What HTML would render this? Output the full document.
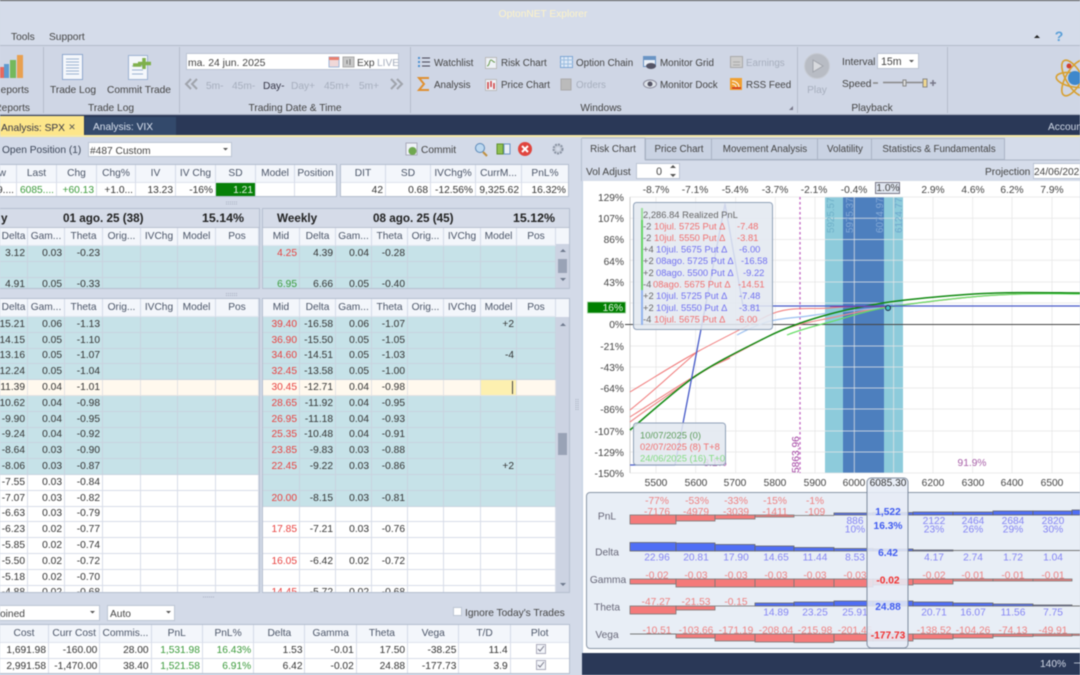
<!DOCTYPE html>
<html><head><meta charset="utf-8"><title>OptionNET Explorer</title>
<style>
html,body{margin:0;padding:0;width:1080px;height:675px;overflow:hidden;background:#d3dae8}
*{box-sizing:border-box}
body{font:10.2px "Liberation Sans",sans-serif;color:#333;position:relative}
#root{position:absolute;left:0;top:0;width:1080px;height:675px;overflow:hidden;filter:blur(.4px)}
.p{position:absolute}
.r{display:flex;height:15.8px;background:#fff}
.r>i{font-style:normal;display:flex;justify-content:flex-end;align-items:center;padding-right:2px;border-right:1px solid #d8dde8;border-bottom:1px solid #d8dde8;white-space:nowrap;flex:none;height:100%;color:#333;position:relative}
.r.a{background:#c6e2e8}.r.c{background:#fff9ee}
.r.a>i{border-color:#c8d3df}.r.c>i{border-color:#e3e3e3}
.h{height:18px;background:#f3f6fb}
.h>i{justify-content:center;padding:0;color:#4b5568;border-color:#d5dbe8;border-bottom:1px solid #dfe4ee}
.L .r>i:nth-child(1){width:28px}.L .r>i:nth-child(2){width:37px}.L .r>i:nth-child(3){width:38px}.L .r>i:nth-child(4){width:38px}.L .r>i:nth-child(5){width:37px}.L .r>i:nth-child(6){width:38px}.L .r>i:nth-child(7){width:43px}
.R .r>i:nth-child(1){width:37px}.R .r>i:nth-child(2){width:36px}.R .r>i:nth-child(3){width:36px}.R .r>i:nth-child(4){width:36px}.R .r>i:nth-child(5){width:36px}.R .r>i:nth-child(6){width:37px}.R .r>i:nth-child(7){width:36px}.R .r>i:nth-child(8){width:39px}
.R .r>i:nth-child(1){color:#e8403f}
.R .r.h>i:nth-child(1){color:#4b5568}
.R .r>i.g{color:#3a9a3a}
.sb{position:absolute;background:#ccd3e2}
.th{background:#d5dbe8;height:19px;border-bottom:1px solid #b9c1d0;font-weight:bold;font-size:11.7px;color:#222;position:relative}
.th span{position:absolute;top:3px;white-space:nowrap}
.th span.pc{font-size:12.4px;top:2px}
.box{border:1px solid #b5bfd0;overflow:hidden}
.T1 .r>i:nth-child(1){width:17px}.T1 .r>i:nth-child(2){width:40px}.T1 .r>i:nth-child(3){width:40px}.T1 .r>i:nth-child(4){width:39px}.T1 .r>i:nth-child(5){width:40px}.T1 .r>i:nth-child(6){width:40px}.T1 .r>i:nth-child(7){width:40px}.T1 .r>i:nth-child(8){width:39px}.T1 .r>i:nth-child(9){width:42px}
.T1 .r.h>i:nth-child(1){justify-content:flex-end;padding-right:10px}
.T2 .r>i:nth-child(1){width:45px}.T2 .r>i:nth-child(2){width:45px}.T2 .r>i:nth-child(3){width:45px}.T2 .r>i:nth-child(4){width:46px}.T2 .r>i:nth-child(5){width:47px}
.T3 .r>i{width:51.3px}.T3 .r>i:nth-child(1){width:49px}.T3 .r>i:nth-child(11){width:59px}
.gr{color:#3a9a3a!important}
.d{height:15px}
.inp{position:absolute;background:#fff;border:1px solid #bcc5d4}
svg text{font-family:"Liberation Sans",sans-serif;font-size:10.2px;fill:#444}
svg text.w{font-size:9.8px}
.m{text-anchor:middle}.e{text-anchor:end}
.dis{fill:#a6aebd}
.rb{fill:#f47a7a;stroke:#777;stroke-width:.8}
.bb{fill:#4f6ef5;stroke:#666;stroke-width:.8}
.lr{fill:#ee8080}.lb{fill:#8484f4}
.tr text{font-size:9.4px}
.rd{fill:#f07070}.bl{fill:#7070f0}.gy{fill:#666}
</style></head>
<body><div id="root">

<!-- title / ribbon backgrounds -->
<div class="p" style="left:0;top:0;width:1080px;height:1px;background:#555"></div>
<div class="p" style="left:0;top:1px;width:1080px;height:45px;background:#d5dcea;border-bottom:1px solid #b4bccb"></div>
<div class="p" style="left:0;top:46px;width:1080px;height:69px;background:#cfd6e5;border-bottom:1px solid #aeb6c6"></div>
<div class="p" style="left:0;top:115px;width:1080px;height:20px;background:#2a3857"></div>
<div class="p" style="left:0;top:116px;width:84px;height:20px;background:#fde68a"></div>
<div class="p" style="left:85px;top:117px;width:91px;height:18px;background:#33496b"></div>
<div class="p" style="left:0;top:135px;width:1080px;height:2px;background:#f6e8a6"></div>

<!-- inputs in ribbon -->
<div class="inp" style="left:186px;top:53px;width:213px;height:17px"></div>
<div class="inp" style="left:877px;top:53px;width:42px;height:16px"></div>

<!-- left panel top -->
<div class="inp" style="left:88px;top:142px;width:144px;height:15px"></div>

<div class="p box T1" style="left:0;top:164px;width:337px;height:33px;border-left:0">
<div class="r h"><i>w</i><i>Last</i><i>Chg</i><i>Chg%</i><i>IV</i><i>IV Chg</i><i>SD</i><i>Model</i><i>Position</i></div>
<div class="r d"><i>9....</i><i class="gr">6085....</i><i class="gr">+60.13</i><i>+1.0...</i><i>13.23</i><i>-16%</i><i style="background:#078007;color:#e8f4e8">1.21</i><i></i><i></i></div>
</div>
<div class="p box T2" style="left:340px;top:164px;width:229px;height:33px">
<div class="r h"><i>DIT</i><i>SD</i><i>IVChg%</i><i>CurrM...</i><i>PnL%</i></div>
<div class="r d"><i>42</i><i>0.68</i><i>-12.56%</i><i>9,325.62</i><i>16.32%</i></div>
</div>

<!-- grid 1 left -->
<div class="p box L" style="left:-1px;top:208px;width:261px;height:81px">
<div class="th"><span style="left:1px">y</span><span style="left:63px">01 ago. 25 (38)</span><span class="pc" style="left:202px">15.14%</span></div>
<div class="r h"><i>Delta</i><i>Gam...</i><i>Theta</i><i>Orig...</i><i>IVChg</i><i>Model</i><i>Pos</i></div>
<div class="r a"><i>3.12</i><i>0.03</i><i>-0.23</i><i></i><i></i><i></i><i></i></div>
<div class="r a"><i></i><i></i><i></i><i></i><i></i><i></i><i></i></div>
<div class="r a"><i>4.91</i><i>0.05</i><i>-0.33</i><i></i><i></i><i></i><i></i></div>
</div>
<!-- grid 1 right -->
<div class="p box R" style="left:262px;top:208px;width:308px;height:81px">
<div class="th"><span style="left:14px">Weekly</span><span style="left:110px">08 ago. 25 (45)</span><span class="pc" style="left:250px">15.12%</span></div>
<div class="r h"><i>Mid</i><i>Delta</i><i>Gam...</i><i>Theta</i><i>Orig...</i><i>IVChg</i><i>Model</i><i>Pos</i></div>
<div class="r a"><i>4.25</i><i>4.39</i><i>0.04</i><i>-0.28</i><i></i><i></i><i></i><i></i></div>
<div class="r a"><i></i><i></i><i></i><i></i><i></i><i></i><i></i><i></i></div>
<div class="r a"><i class="g">6.95</i><i>6.66</i><i>0.05</i><i>-0.40</i><i></i><i></i><i></i><i></i></div>
</div>
<div class="sb" style="left:556px;top:244px;width:13px;height:44px"></div>
<div class="p" style="left:558px;top:259px;width:9px;height:14px;background:#99a3b6"></div>

<!-- grid 2 left -->
<div class="p box L" style="left:-1px;top:298px;width:261px;height:295px">
<div class="r h"><i>Delta</i><i>Gam...</i><i>Theta</i><i>Orig...</i><i>IVChg</i><i>Model</i><i>Pos</i></div>
<div class="r a"><i>-15.21</i><i>0.06</i><i>-1.13</i><i></i><i></i><i></i><i></i></div>
<div class="r a"><i>-14.15</i><i>0.05</i><i>-1.10</i><i></i><i></i><i></i><i></i></div>
<div class="r a"><i>-13.16</i><i>0.05</i><i>-1.07</i><i></i><i></i><i></i><i></i></div>
<div class="r a"><i>-12.24</i><i>0.05</i><i>-1.04</i><i></i><i></i><i></i><i></i></div>
<div class="r c"><i>-11.39</i><i>0.04</i><i>-1.01</i><i></i><i></i><i></i><i></i></div>
<div class="r a"><i>-10.62</i><i>0.04</i><i>-0.98</i><i></i><i></i><i></i><i></i></div>
<div class="r a"><i>-9.90</i><i>0.04</i><i>-0.95</i><i></i><i></i><i></i><i></i></div>
<div class="r a"><i>-9.24</i><i>0.04</i><i>-0.92</i><i></i><i></i><i></i><i></i></div>
<div class="r a"><i>-8.64</i><i>0.03</i><i>-0.90</i><i></i><i></i><i></i><i></i></div>
<div class="r a"><i>-8.06</i><i>0.03</i><i>-0.87</i><i></i><i></i><i></i><i></i></div>
<div class="r"><i>-7.55</i><i>0.03</i><i>-0.84</i><i></i><i></i><i></i><i></i></div>
<div class="r"><i>-7.07</i><i>0.03</i><i>-0.82</i><i></i><i></i><i></i><i></i></div>
<div class="r"><i>-6.63</i><i>0.03</i><i>-0.79</i><i></i><i></i><i></i><i></i></div>
<div class="r"><i>-6.23</i><i>0.02</i><i>-0.77</i><i></i><i></i><i></i><i></i></div>
<div class="r"><i>-5.85</i><i>0.02</i><i>-0.74</i><i></i><i></i><i></i><i></i></div>
<div class="r"><i>-5.50</i><i>0.02</i><i>-0.72</i><i></i><i></i><i></i><i></i></div>
<div class="r"><i>-5.18</i><i>0.02</i><i>-0.70</i><i></i><i></i><i></i><i></i></div>
<div class="r"><i>-4.88</i><i>0.02</i><i>-0.68</i><i></i><i></i><i></i><i></i></div>
</div>
<!-- grid 2 right -->
<div class="p box R" style="left:262px;top:298px;width:308px;height:295px">
<div class="r h"><i>Mid</i><i>Delta</i><i>Gam...</i><i>Theta</i><i>Orig...</i><i>IVChg</i><i>Model</i><i>Pos</i></div>
<div class="r a"><i>39.40</i><i>-16.58</i><i>0.06</i><i>-1.07</i><i></i><i></i><i>+2</i><i></i></div>
<div class="r a"><i>36.90</i><i>-15.50</i><i>0.05</i><i>-1.05</i><i></i><i></i><i></i><i></i></div>
<div class="r a"><i>34.60</i><i>-14.51</i><i>0.05</i><i>-1.03</i><i></i><i></i><i>-4</i><i></i></div>
<div class="r a"><i>32.45</i><i>-13.58</i><i>0.05</i><i>-1.00</i><i></i><i></i><i></i><i></i></div>
<div class="r c"><i>30.45</i><i>-12.71</i><i>0.04</i><i>-0.98</i><i></i><i></i><i style="background:#fdf0b0"><span style="position:absolute;right:3px;top:1px;width:1px;height:13px;background:#444"></span></i><i></i></div>
<div class="r a"><i>28.65</i><i>-11.92</i><i>0.04</i><i>-0.95</i><i></i><i></i><i></i><i></i></div>
<div class="r a"><i>26.95</i><i>-11.18</i><i>0.04</i><i>-0.93</i><i></i><i></i><i></i><i></i></div>
<div class="r a"><i>25.35</i><i>-10.48</i><i>0.04</i><i>-0.91</i><i></i><i></i><i></i><i></i></div>
<div class="r a"><i>23.85</i><i>-9.83</i><i>0.03</i><i>-0.88</i><i></i><i></i><i></i><i></i></div>
<div class="r a"><i>22.45</i><i>-9.22</i><i>0.03</i><i>-0.86</i><i></i><i></i><i>+2</i><i></i></div>
<div class="r a"><i></i><i></i><i></i><i></i><i></i><i></i><i></i><i></i></div>
<div class="r a"><i>20.00</i><i>-8.15</i><i>0.03</i><i>-0.81</i><i></i><i></i><i></i><i></i></div>
<div class="r"><i></i><i></i><i></i><i></i><i></i><i></i><i></i><i></i></div>
<div class="r"><i>17.85</i><i>-7.21</i><i>0.03</i><i>-0.76</i><i></i><i></i><i></i><i></i></div>
<div class="r"><i></i><i></i><i></i><i></i><i></i><i></i><i></i><i></i></div>
<div class="r"><i>16.05</i><i>-6.42</i><i>0.02</i><i>-0.72</i><i></i><i></i><i></i><i></i></div>
<div class="r"><i></i><i></i><i></i><i></i><i></i><i></i><i></i><i></i></div>
<div class="r"><i>14.45</i><i>-5.72</i><i>0.02</i><i>-0.68</i><i></i><i></i><i></i><i></i></div>
</div>
<div class="sb" style="left:556px;top:317px;width:13px;height:275px"></div>
<div class="p" style="left:558px;top:433px;width:9px;height:22px;background:#99a3b6"></div>

<!-- bottom controls -->
<div class="inp" style="left:-2px;top:605px;width:102px;height:16px"></div>
<div class="inp" style="left:107px;top:605px;width:68px;height:16px"></div>
<div class="inp" style="left:453px;top:607px;width:9px;height:9px"></div>
<div class="p box T3" style="left:-1px;top:624px;width:571px;height:50px">
<div class="r h"><i>Cost</i><i>Curr Cost</i><i>Commis...</i><i>PnL</i><i>PnL%</i><i>Delta</i><i>Gamma</i><i>Theta</i><i>Vega</i><i>T/D</i><i>Plot</i></div>
<div class="r"><i>1,691.98</i><i>-160.00</i><i>28.00</i><i class="gr">1,531.98</i><i class="gr">16.43%</i><i>1.53</i><i>-0.01</i><i>17.50</i><i>-38.25</i><i>11.4</i><i></i></div>
<div class="r"><i>2,991.58</i><i>-1,470.00</i><i>38.40</i><i class="gr">1,521.58</i><i class="gr">6.91%</i><i>6.42</i><i>-0.02</i><i>24.88</i><i>-177.73</i><i>3.9</i><i></i></div>
</div>

<!-- right panel backgrounds -->
<div class="p" style="left:581px;top:138px;width:499px;height:43px;background:#d5dcea;border-left:1px solid #b5bfd0"></div>
<div class="p" style="left:582px;top:181px;width:498px;height:472px;background:#fff;border-left:1px solid #c3cfe2"></div>
<div class="inp" style="left:636px;top:163px;width:44px;height:16px"></div>
<div class="inp" style="left:1033px;top:163px;width:60px;height:16px"></div>
<div class="p" style="left:582px;top:653px;width:498px;height:22px;background:#2a3857"></div>
<div class="p" style="left:586px;top:492px;width:500px;height:157px;background:#e8eef6;border:1px solid #8a97a8;border-radius:4px"></div>

<svg class="p" style="left:0;top:0" width="1080" height="675" viewBox="0 0 1080 675" xmlns="http://www.w3.org/2000/svg">
<!-- title & menu -->
<text x="543" y="17" class="m" style="fill:#fdf3c8">OptonNET Explorer</text>
<text x="11" y="40">Tools</text><text x="49" y="40">Support</text>
<path d="M1034 38l3-3 3 3z" fill="#222"/>
<text x="1059" y="41" class="m" style="fill:#5a9fd8;font-size:14px;font-weight:bold">?</text>

<!-- separators -->
<g stroke="#b6bdcc"><path d="M43.5 47v66M179.5 47v66M410.5 47v66M797.5 47v66M947.5 47v66"/></g>

<!-- reports icon -->
<rect x="-1" y="67" width="5" height="11" fill="#e66a5e"/><rect x="4" y="64" width="5" height="14" fill="#5f9bd0"/><rect x="10" y="60" width="6" height="18" fill="#74b85c"/><rect x="17" y="55" width="6" height="23" fill="#e8a050"/>
<text x="29" y="93" class="e">Reports</text>
<text x="30" y="111" class="e">Reports</text>
<!-- trade log icon -->
<rect x="62.5" y="54.5" width="20" height="25" fill="#f4f7fb" stroke="#8fa9cd"/><path d="M66 59h13M66 62h13M66 65h13M66 68h13M66 71h13M66 74h13" stroke="#9db3d2"/>
<text x="73" y="93" class="m">Trade Log</text>
<rect x="128.5" y="55.5" width="19" height="24" fill="#f4f7fb" stroke="#9db3d2"/><path d="M132 66h11M132 70h11M132 74h11" stroke="#9db3d2"/>
<path d="M133 65h8M144 58v11M138 63.5h13" stroke="#7fb04c" stroke-width="3.5" fill="none"/>
<text x="139" y="93" class="m">Commit Trade</text>
<text x="111" y="111" class="m">Trade Log</text>

<!-- date -->
<text x="188" y="66" style="font-size:10.4px">ma. 24 jun. 2025</text>
<rect x="329" y="57" width="10" height="10" fill="#f0d8d8" stroke="#a0b8d8"/><rect x="329" y="57" width="10" height="3" fill="#e88070"/>
<rect x="343" y="57" width="11" height="10" fill="#c8c8c8" stroke="#aaa"/><path d="M347 60v4M350 59v6" stroke="#777"/>
<text x="357" y="66">Exp</text><text x="377" y="66" class="dis">LIVE</text>
<path d="M191 79l-5 5 5 5M197 79l-5 5 5 5M391 79l5 5-5 5M397 79l5 5-5 5" fill="none" stroke="#a0a4ac" stroke-width="2"/>
<text x="206" y="89" class="dis">5m-</text><text x="232" y="89" class="dis">45m-</text><text x="263" y="89" style="fill:#334">Day-</text><text x="291" y="89" class="dis">Day+</text><text x="324" y="89" class="dis">45m+</text><text x="359" y="89" class="dis">5m+</text>
<text x="295" y="111" class="m">Trading Date &amp; Time</text>

<!-- windows -->
<g fill="#4a90d0"><rect x="418" y="57" width="2" height="2"/><rect x="418" y="61" width="2" height="2"/><rect x="418" y="65" width="2" height="2"/></g><path d="M422 58h8M422 62h8M422 66h8" stroke="#445"/>
<text x="434" y="66" class="w">Watchlist</text>
<path d="M429 78h-10l5 6-5 6h10" fill="none" stroke="#e09030" stroke-width="2"/>
<text x="434" y="88" class="w">Analysis</text>
<rect x="485.5" y="57.5" width="11" height="11" fill="#eef2f7" stroke="#bbb"/><path d="M487 66c3 0 2-6 4-6s2 3 4 2" fill="none" stroke="#6a9a50"/>
<text x="501" y="66" class="w">Risk Chart</text>
<rect x="485.5" y="79.5" width="11" height="11" fill="#eef2f7" stroke="#bbb"/><path d="M488 82v7M491 81v6M494 83v6" stroke="#d04040" stroke-width="1.5"/>
<text x="501" y="88" class="w">Price Chart</text>
<rect x="560.5" y="56.5" width="12" height="11" fill="#dce8f6" stroke="#7ea6d4"/><path d="M560 60h13M560 64h13M564 57v10M568 57v10" stroke="#9cbde0" />
<text x="576" y="66" class="w">Option Chain</text>
<rect x="561" y="79" width="10" height="11" fill="#bbb" stroke="#aaa"/>
<text x="576" y="88" class="w dis">Orders</text>
<rect x="643.5" y="56.5" width="12" height="10" fill="#e8eef6" stroke="#6a94c4"/><rect x="644" y="57" width="11" height="3" fill="#6a94c4"/><ellipse cx="651" cy="66" rx="5" ry="3" fill="#556"/>
<text x="660" y="66" class="w">Monitor Grid</text>
<ellipse cx="650" cy="84" rx="6.5" ry="4" fill="#dfe4ea" stroke="#889"/><circle cx="650" cy="84" r="2.5" fill="#556"/>
<text x="660" y="88" class="w">Monitor Dock</text>
<rect x="730.5" y="56.5" width="12" height="11" fill="#ccc" stroke="#aaa"/><path d="M733 62h7M733 65h7" stroke="#aaa"/>
<text x="746" y="66" class="w dis">Earnings</text>
<rect x="730" y="78" width="12" height="12" fill="#f0a030"/><path d="M732 88h9" stroke="#d03020" stroke-width="1.5"/><path d="M732 81c4 0 7 3 7 6M732 84c2 0 4 1 4 3" fill="none" stroke="#fff"/>
<text x="746" y="88" class="w">RSS Feed</text>
<text x="601" y="111" class="m">Windows</text>
<path d="M793 110v-4l-4 4z" fill="#778"/>

<!-- playback -->
<circle cx="817" cy="66" r="12.5" fill="#b8bcc4" stroke="#c8ccd4"/><path d="M813 60l10 6-10 6z" fill="#d8dade" stroke="#a0a4ac"/>
<text x="817" y="93" class="m dis">Play</text>
<text x="842" y="65">Interval</text><text x="881" y="65" style="font-size:10.6px">15m</text><path d="M909 60l2.5 2.5 2.5-2.5z" fill="#555"/>
<text x="842" y="87">Speed</text>
<path d="M873 83h5M883 82.5h42" stroke="#888" stroke-width="1.5"/><rect x="903" y="80" width="3" height="6" fill="#ddd" stroke="#888"/><rect x="923" y="79" width="4" height="8" fill="#f0d890" stroke="#888"/><path d="M930 83h6M933 80v6" stroke="#778" stroke-width="1.5"/>
<text x="872" y="111" class="m">Playback</text>
<!-- atom -->
<g fill="none" stroke="#d8a030" stroke-width="1.6"><ellipse cx="1074" cy="78" rx="20" ry="8" transform="rotate(60 1074 78)"/><ellipse cx="1074" cy="78" rx="20" ry="8" transform="rotate(-60 1074 78)"/><ellipse cx="1074" cy="80" rx="18" ry="7" transform="rotate(10 1074 80)"/></g>
<circle cx="1075" cy="78" r="7" fill="#3f88cc"/><circle cx="1069" cy="66" r="2.5" fill="#d04030"/>

<!-- tabs -->
<text x="1" y="131" style="fill:#334">Analysis: SPX</text>
<text x="72" y="130" class="m" style="fill:#555;font-size:9px">✕</text>
<text x="93" y="130" style="fill:#d8e0ee">Analysis: VIX</text>
<text x="1048" y="130" style="fill:#cfd7e5">Account</text>

<!-- open position row -->
<text x="2" y="153" style="fill:#3c4658">Open Position (1)</text>
<text x="90" y="154">#487 Custom</text><path d="M223 148l2.5 2.5 2.5-2.500z" fill="#555"/>
<rect x="406" y="143" width="11" height="12" fill="#eef2f7" stroke="#aab"/><circle cx="412.5" cy="151" r="4" fill="#70a850"/>
<text x="421" y="153">Commit</text>
<circle cx="480" cy="148" r="4.5" fill="#bcd8f0" stroke="#5a88b8"/><path d="M483 152l4 4" stroke="#c09040" stroke-width="2"/>
<rect x="497" y="144" width="6" height="10" fill="#90c050" stroke="#609030"/><rect x="504" y="144" width="6" height="10" fill="#e8eef6" stroke="#6a94c4"/>
<circle cx="525" cy="149" r="7" fill="#e0453e"/><path d="M522 146l6 6M528 146l-6 6" stroke="#fff" stroke-width="2"/>
<circle cx="558" cy="149" r="4.5" fill="#c3cad6" stroke="#8a93a3" stroke-width="2" stroke-dasharray="2 1"/><circle cx="558" cy="149" r="2" fill="#d3dae8"/>

<!-- splitter grips & scroll arrows -->
<g fill="none" stroke="#a9b1c1" stroke-dasharray="1 1"><path d="M226 202h12M226 204h12M226 293.5h12M226 295.5h12M203 597h12M576 399v12M578 399v12"/></g>
<path d="M560 252l3-3 3 3zM560 278l3 3 3-3zM560 326l3-3 3 3zM560 583l3 3 3-3z" fill="#6f7a8e"/>

<!-- bottom controls -->
<text x="0" y="617">oined</text><path d="M90 611l2.5 2.5 2.5-2.5z" fill="#555"/>
<text x="110" y="617">Auto</text><path d="M166 611l2.5 2.500 2.5-2.5z" fill="#555"/>
<text x="465" y="616">Ignore Today's Trades</text>
<rect x="536.5" y="644.5" width="9" height="9" fill="#f4f6fa" stroke="#aab"/><path d="M538 649l2 2 4-5" fill="none" stroke="#778"/>
<rect x="536.5" y="660.5" width="9" height="9" fill="#f4f6fa" stroke="#aab"/><path d="M538 665l2 2 4-5" fill="none" stroke="#778"/>

<!-- right tabs -->
<g fill="#c9d2e2" stroke="#aab4c5"><rect x="645.5" y="138.5" width="66" height="21"/><rect x="711.5" y="138.5" width="106" height="21"/><rect x="817.5" y="138.5" width="54" height="21"/><rect x="871.5" y="138.5" width="133" height="21"/></g>
<path d="M582 138h63v22" fill="none" stroke="#aab4c5"/><path d="M645 160h435" stroke="#aab4c5"/>
<text x="613" y="152" class="m w">Risk Chart</text><text x="679" y="152" class="m w">Price Chart</text><text x="765" y="152" class="m w">Movement Analysis</text><text x="845" y="152" class="m w">Volatility</text><text x="939" y="152" class="m w">Statistics &amp; Fundamentals</text>
<text x="586" y="175">Vol Adjust</text><text x="662" y="175" class="e" style="font-size:10.6px">0</text><path d="M670 168l3-3 3 3zM670 174l3 3 3-3z" fill="#555"/>
<text x="985" y="175">Projection</text><text x="1034" y="175">24/06/202</text>

<!-- chart -->
<rect x="825" y="197" width="78" height="276" fill="#8dcbdb"/>
<rect x="843" y="197" width="41" height="276" fill="#4d7fbe"/>
<g stroke="#e6e6e6" stroke-opacity=".75"><path d="M630 197h450M630 218.3h450M630 239.5h450M630 260.3h450M630 282h450M630 303h450M630 346h450M630 367h450M630 388h450M630 409h450M630 431h450M630 452h450M630 473h450"/>
<path d="M656 197v276M695.7 197v276M735.7 197v276M775.3 197v276M815 197v276M854.3 197v276M893.6 197v276M933 197v276M972.7 197v276M1012 197v276M1052 197v276"/></g>
<path d="M630 197v276" stroke="#ccc"/>
<path d="M625 324.5h455" stroke="#444"/>
<path d="M800 197v276" stroke="#c060c0" stroke-width="1.3" stroke-dasharray="2.5 2.5"/>
<text transform="translate(834 233) rotate(-90)" style="fill:#6fb0c8;font-size:9.8px">5925.57</text><text transform="translate(853 233) rotate(-90)" style="fill:#84a9d6;font-size:9.8px">5975.37</text><text transform="translate(883 233) rotate(-90)" style="fill:#84a9d6;font-size:9.8px">6074.97</text><text transform="translate(902 233) rotate(-90)" style="fill:#6fa8cc;font-size:9.8px">6124.77</text>
<text transform="translate(799 473) rotate(-90)" style="fill:#a040a0">5863.96</text>
<text x="715" y="466" class="m" style="fill:#a040a0">8.1%</text><text x="972" y="466" class="m" style="fill:#a860a8">91.9%</text>

<g fill="none" stroke-linejoin="round">
<path d="M630 392C655 377 675 364 697 352S745 327 767 316S810 310 830 308S870 306 884 306" stroke="#f07878"/>
<path d="M630 410C655 390 678 368 697 352" stroke="#f07878"/>
<path d="M630 417C652 403 672 390 693 377S720 363 730 358" stroke="#f07878"/>
<path d="M630 422C650 407 670 394 690 380S745 349 767 337S810 322 830 318S865 310 880 308S960 297 997 295S1060 293 1080 293" stroke="#f08a8a" stroke-width="1.2"/>
<path d="M737 335C748 329 758 325 767 322S790 318 800 317S820 314 830 313S865 309 880 308" stroke="#9cc0f0" stroke-width="1.2"/>
<path d="M787 335C802 329 815 326 830 322S865 311 883 308S960 297 997 295S1060 294 1080 294" stroke="#66dd66" stroke-width="1.2"/>
<path d="M630 430C650 413 670 395 690 380S745 348 767 337S815 318 830 314S865 306 883 303S960 294 997 293S1060 293 1080 293" stroke="#118a11" stroke-width="1.5"/>
<path d="M630 465H675L725 204L743 306H1080" stroke="#4458c8" stroke-width="1.3"/>
<path d="M830 306.5h55" stroke="#7a3fa0"/>
</g>
<circle cx="888" cy="308" r="2.5" fill="#40c0c0" stroke="#224"/>

<!-- Y labels -->
<text x="624" y="201" class="e">129%</text><text x="624" y="222" class="e">107%</text><text x="624" y="243" class="e">86%</text><text x="624" y="265" class="e">64%</text><text x="624" y="286" class="e">43%</text><text x="624" y="328" class="e">0%</text><text x="624" y="350" class="e">-21%</text><text x="624" y="371" class="e">-43%</text><text x="624" y="392" class="e">-64%</text><text x="624" y="413" class="e">-86%</text><text x="624" y="435" class="e">-107%</text><text x="624" y="456" class="e">-129%</text><text x="624" y="477" class="e">-150%</text>
<rect x="587.5" y="302" width="38" height="11" fill="#008000" stroke="#9ccf9c" stroke-width=".8"/>
<text x="623" y="311" class="e" style="fill:#e8f4e8">16%</text>

<!-- top labels -->
<text x="656" y="193" class="m">-8.7%</text><text x="695" y="193" class="m">-7.1%</text><text x="735" y="193" class="m">-5.4%</text><text x="775" y="193" class="m">-3.7%</text><text x="814" y="193" class="m">-2.1%</text><text x="854" y="193" class="m">-0.4%</text>
<text x="933" y="193" class="m">2.9%</text><text x="973" y="193" class="m">4.6%</text><text x="1012" y="193" class="m">6.2%</text><text x="1052" y="193" class="m">7.9%</text>
<rect x="875.5" y="182.5" width="24" height="11" fill="#e0e6f0" stroke="#778"/><text x="888" y="191" class="m">1.0%</text>

<!-- x labels -->
<text x="656" y="486" class="m">5500</text><text x="696" y="486" class="m">5600</text><text x="735" y="486" class="m">5700</text><text x="775" y="486" class="m">5800</text><text x="815" y="486" class="m">5900</text><text x="854" y="486" class="m">6000</text><text x="933" y="486" class="m">6200</text><text x="973" y="486" class="m">6300</text><text x="1012" y="486" class="m">6400</text><text x="1052" y="486" class="m">6500</text>

<!-- tooltip -->
<rect x="633.5" y="202.5" width="139" height="127" rx="3" fill="#e2e8f0" fill-opacity=".87" stroke="#8fa0b8"/>
<g stroke-width="2"><path d="M642 208v12" stroke="#9ce09c"/><path d="M642 220v70" stroke="#66d466"/><path d="M642 290v35" stroke="#94b4ee"/></g>
<g class="tr">
<text x="643" y="218" class="gy">2,286.84 Realized PnL</text>
<text x="643" y="229.5" class="gy">-2</text><text x="654" y="229.5" class="rd">10jul. 5725 Put Δ</text><text x="737" y="229.5" class="rd">-7.48</text>
<text x="643" y="241" class="gy">-2</text><text x="654" y="241" class="rd">10jul. 5550 Put Δ</text><text x="737" y="241" class="rd">-3.81</text>
<text x="643" y="252.5" class="gy">+4</text><text x="656" y="252.5" class="bl">10jul. 5675 Put Δ</text><text x="739" y="252.5" class="bl">-6.00</text>
<text x="643" y="264" class="gy">+2</text><text x="656" y="264" class="bl">08ago. 5725 Put Δ</text><text x="741" y="264" class="bl">-16.58</text>
<text x="643" y="276" class="gy">+2</text><text x="656" y="276" class="bl">08ago. 5500 Put Δ</text><text x="743" y="276" class="bl">-9.22</text>
<text x="643" y="287.5" class="gy">-4</text><text x="653" y="287.5" class="rd">08ago. 5675 Put Δ</text><text x="738" y="287.5" class="rd">-14.51</text>
<text x="643" y="299" class="gy">+2</text><text x="656" y="299" class="bl">10jul. 5725 Put Δ</text><text x="739" y="299" class="bl">-7.48</text>
<text x="643" y="311" class="gy">+2</text><text x="656" y="311" class="bl">10jul. 5550 Put Δ</text><text x="739" y="311" class="bl">-3.81</text>
<text x="643" y="322.5" class="gy">-4</text><text x="654" y="322.5" class="rd">10jul. 5675 Put Δ</text><text x="736" y="322.5" class="rd">-6.00</text>
</g>
<!-- legend -->
<rect x="633.5" y="423" width="92" height="42" rx="3" fill="#e2e8f0" fill-opacity=".87" stroke="#8fa0b8"/>
<g class="tr"><text x="640" y="438.5" style="fill:#5c9c5c">10/07/2025 (0)</text><text x="640" y="450" class="rd">02/07/2025 (8) T+8</text><text x="640" y="461.5" style="fill:#84dc84">24/06/2025 (16) T+0</text></g>

<!-- lower panel labels -->
<text x="607" y="519.5" class="m" style="fill:#667">PnL</text><text x="607" y="555.5" class="m" style="fill:#667">Delta</text><text x="608" y="583" class="m" style="fill:#667">Gamma</text><text x="607" y="610.5" class="m" style="fill:#667">Theta</text><text x="607" y="638" class="m" style="fill:#667">Vega</text>

<!-- PnL bars -->
<rect class="rb" x="630" y="515" width="46" height="9"/><rect class="rb" x="676" y="515" width="39" height="6"/><rect class="rb" x="715" y="515" width="40" height="4"/><rect class="rb" x="755" y="515" width="39" height="2"/><path d="M794 515.5h40" stroke="#888"/>
<rect class="bb" x="834" y="513" width="39" height="2"/><rect class="bb" x="873" y="512.5" width="40" height="2.5"/><rect class="bb" x="913" y="512" width="40" height="3"/><rect class="bb" x="953" y="512" width="40" height="3"/><rect class="bb" x="993" y="511" width="40" height="4"/><rect class="bb" x="1033" y="511" width="39" height="4"/><rect class="bb" x="1072" y="510" width="10" height="5"/>
<text x="657" y="504" class="m lr">-77%</text><text x="697" y="504" class="m lr">-53%</text><text x="736" y="504" class="m lr">-33%</text><text x="775" y="504" class="m lr">-15%</text><text x="815" y="504" class="m lr">-1%</text>
<text x="657" y="515" class="m lr">-7176</text><text x="696" y="515" class="m lr">-4979</text><text x="736" y="515" class="m lr">-3039</text><text x="775" y="515" class="m lr">-1411</text><text x="815" y="515" class="m lr">-109</text>
<text x="855" y="524" class="m lb">886</text><text x="855" y="532.5" class="m lb">10%</text><text x="934" y="524" class="m lb">2122</text><text x="934" y="532.5" class="m lb">23%</text><text x="973" y="524" class="m lb">2464</text><text x="973" y="532.5" class="m lb">26%</text><text x="1013" y="524" class="m lb">2684</text><text x="1013" y="532.5" class="m lb">29%</text><text x="1053" y="524" class="m lb">2820</text><text x="1053" y="532.5" class="m lb">30%</text>

<!-- Delta -->
<rect class="bb" x="630" y="542.5" width="46" height="8.5"/><rect class="bb" x="676" y="543" width="39" height="8"/><rect class="bb" x="715" y="544.5" width="40" height="6.5"/><rect class="bb" x="755" y="546" width="39" height="5"/><rect class="bb" x="794" y="547.5" width="40" height="3.5"/><rect class="bb" x="834" y="548.5" width="39" height="2.5"/><rect class="bb" x="873" y="549" width="40" height="2"/><rect class="bb" x="913" y="550" width="40" height="1"/><path d="M953 550.5h127" stroke="#777"/>
<text x="657" y="560.5" class="m lb">22.96</text><text x="696" y="560.5" class="m lb">20.81</text><text x="736" y="560.5" class="m lb">17.90</text><text x="776" y="560.5" class="m lb">14.65</text><text x="815" y="560.5" class="m lb">11.44</text><text x="855" y="560.5" class="m lb">8.53</text><text x="934" y="560.5" class="m lb">4.17</text><text x="973" y="560.5" class="m lb">2.74</text><text x="1013" y="560.5" class="m lb">1.72</text><text x="1053" y="560.5" class="m lb">1.04</text>

<!-- Gamma -->
<rect class="rb" x="630" y="579" width="46" height="5"/><rect class="rb" x="676" y="579" width="39" height="8"/><rect class="rb" x="715" y="579" width="40" height="8"/><rect class="rb" x="755" y="579" width="39" height="8"/><rect class="rb" x="794" y="579" width="40" height="8"/><rect class="rb" x="834" y="579" width="39" height="8"/><rect class="rb" x="873" y="579" width="40" height="6"/><rect class="rb" x="913" y="579" width="40" height="5"/><rect class="rb" x="953" y="579" width="40" height="2"/><rect class="rb" x="993" y="579" width="40" height="2"/><rect class="rb" x="1033" y="579" width="39" height="2"/>
<text x="657" y="578.5" class="m lr">-0.02</text><text x="696" y="578.5" class="m lr">-0.03</text><text x="736" y="578.5" class="m lr">-0.03</text><text x="776" y="578.5" class="m lr">-0.03</text><text x="815" y="578.5" class="m lr">-0.03</text><text x="855" y="578.5" class="m lr">-0.03</text><text x="934" y="578.5" class="m lr">-0.02</text><text x="973" y="578.5" class="m lr">-0.01</text><text x="1013" y="578.5" class="m lr">-0.01</text><text x="1053" y="578.5" class="m lr">-0.01</text>

<!-- Theta -->
<rect class="rb" x="630" y="606" width="46" height="8"/><rect class="rb" x="676" y="606" width="39" height="4"/><path d="M715 606h40" stroke="#888"/>
<rect class="bb" x="755" y="603" width="39" height="3"/><rect class="bb" x="794" y="602" width="40" height="4"/><rect class="bb" x="834" y="601" width="39" height="5"/><rect class="bb" x="873" y="601" width="40" height="5"/><rect class="bb" x="913" y="602" width="40" height="4"/><rect class="bb" x="953" y="603" width="40" height="3"/><rect class="bb" x="993" y="604" width="40" height="2"/><rect class="bb" x="1033" y="605" width="39" height="1"/><path d="M1072 606h10" stroke="#777"/>
<text x="656" y="605" class="m lr">-47.27</text><text x="696" y="605" class="m lr">-21.53</text><text x="736" y="605" class="m lr">-0.15</text>
<text x="776" y="615.5" class="m lb">14.89</text><text x="815" y="615.5" class="m lb">23.25</text><text x="855" y="615.5" class="m lb">25.91</text><text x="934" y="615.5" class="m lb">20.71</text><text x="973" y="615.5" class="m lb">16.07</text><text x="1013" y="615.5" class="m lb">11.56</text><text x="1053" y="615.5" class="m lb">7.75</text>

<!-- Vega -->
<path d="M630 634h46" stroke="#777"/>
<rect class="rb" x="676" y="634" width="39" height="4"/><rect class="rb" x="715" y="634" width="40" height="7"/><rect class="rb" x="755" y="634" width="39" height="8"/><rect class="rb" x="794" y="634" width="40" height="8.5"/><rect class="rb" x="834" y="634" width="39" height="7"/><rect class="rb" x="873" y="634" width="40" height="7"/><rect class="rb" x="913" y="634" width="40" height="5"/><rect class="rb" x="953" y="634" width="40" height="4"/><rect class="rb" x="993" y="634" width="40" height="2.5"/><rect class="rb" x="1033" y="634" width="39" height="2"/><rect class="rb" x="1072" y="634" width="10" height="1.5"/>
<text x="657" y="633.5" class="m lr">-10.51</text><text x="696" y="633.5" class="m lr">-103.66</text><text x="736" y="633.5" class="m lr">-171.19</text><text x="776" y="633.5" class="m lr">-208.04</text><text x="815" y="633.5" class="m lr">-215.98</text><text x="855" y="633.5" class="m lr">-201.45</text><text x="934" y="633.5" class="m lr">-138.52</text><text x="973" y="633.5" class="m lr">-104.26</text><text x="1013" y="633.5" class="m lr">-74.13</text><text x="1053" y="633.5" class="m lr">-49.91</text>

<!-- crosshair overlay -->
<rect x="867" y="478" width="41" height="170" rx="4" fill="#e6ecf6" fill-opacity=".88" stroke="#7f8c9f"/>
<text x="888" y="486" class="m" style="fill:#333">6085.30</text>
<g style="font-weight:bold">
<text x="888" y="515" class="m" style="fill:#3f5bf0">1,522</text><text x="888" y="529" class="m" style="fill:#3f5bf0">16.3%</text><text x="888" y="556" class="m" style="fill:#3f5bf0">6.42</text><text x="888" y="583.5" class="m" style="fill:#f03030">-0.02</text><text x="888" y="610" class="m" style="fill:#3f5bf0">24.88</text><text x="888" y="638.5" class="m" style="fill:#f03030">-177.73</text></g>

<!-- bottom bar -->
<text x="1040" y="667" style="fill:#d3dae8">140%</text><path d="M1074 663h6" stroke="#aeb6c6"/>
</svg>
</div></body></html>
